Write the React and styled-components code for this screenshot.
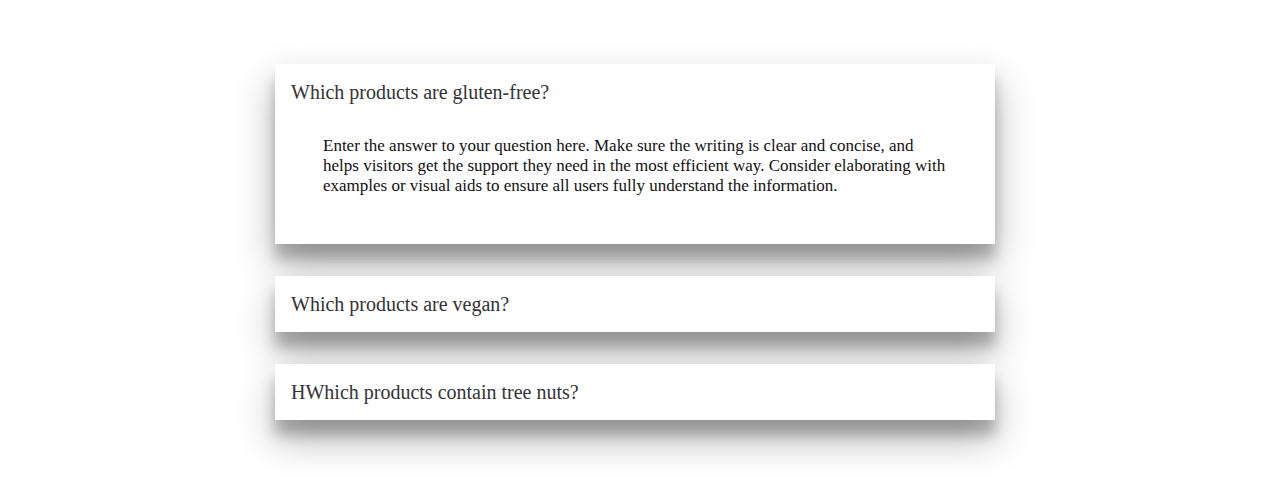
import styled, { createGlobalStyle } from "styled-components"

const GlobalStyle = createGlobalStyle`
    body {
        margin: 0;
        min-height: 100vh;
        background: #fff;
        font-family: "Liberation Serif", "Times New Roman", serif;
    }
`

const FaqList = styled.div`
    width: 720px;
    margin: 0 auto;
    padding: 64px 0;
    display: flex;
    flex-direction: column;
    gap: 32px;
`

const Item = styled.section`
    background: #fff;
    box-shadow: 0 19px 38px rgba(0, 0, 0, 0.3), 0 15px 12px rgba(0, 0, 0, 0.22);
`

const Question = styled.h3`
    margin: 0;
    padding: 16px;
    font-size: 20px;
    line-height: 24px;
    font-weight: 400;
    color: #333;
`

const Answer = styled.p`
    margin: 0;
    padding: 16px 48px 48px;
    font-size: 17px;
    line-height: 20px;
    color: #111;
`

const faqs = [
    {
        q: "Which products are gluten-free?",
        a: "Enter the answer to your question here. Make sure the writing is clear and concise, and helps visitors get the support they need in the most efficient way. Consider elaborating with examples or visual aids to ensure all users fully understand the information.",
    },
    { q: "Which products are vegan?" },
    { q: "HWhich products contain tree nuts?" },
]

export default function App() {
    return (
        <>
            <GlobalStyle />
            <FaqList>
                {faqs.map((f) => (
                    <Item key={f.q}>
                        <Question>{f.q}</Question>
                        {f.a && <Answer>{f.a}</Answer>}
                    </Item>
                ))}
            </FaqList>
        </>
    )
}
